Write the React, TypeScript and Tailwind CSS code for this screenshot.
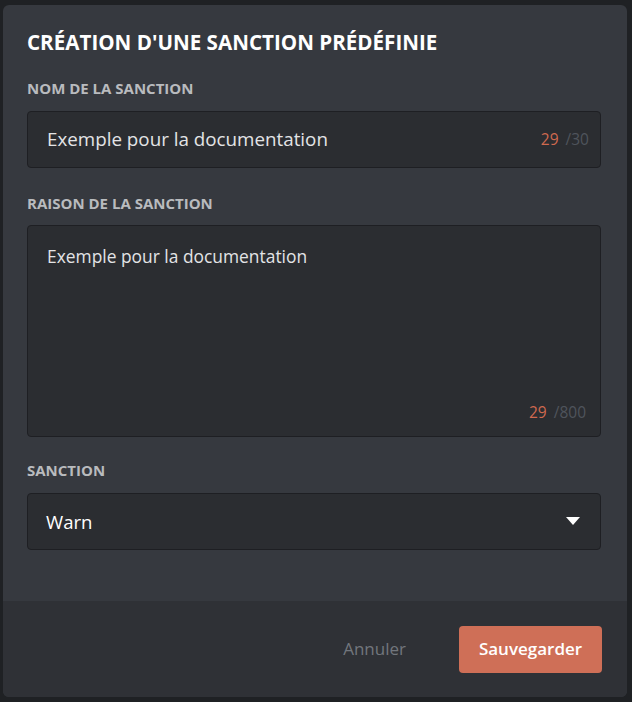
import { useState } from "react";

export default function App() {
  const [name, setName] = useState("Exemple pour la documentation");
  const [reason, setReason] = useState("Exemple pour la documentation");
  const [type] = useState("Warn");

  return (
    <div className="w-[632px] h-[702px] bg-[#1f2124] pt-[5px] pl-[3px] overflow-hidden" style={{ fontFamily: '"Open Sans", sans-serif' }}>
      <div className="w-[624px] h-[692px] rounded-[6px] bg-[#36393f] flex flex-col overflow-hidden">
        <div className="flex-1 pl-[24px] pr-[26px] pt-[27px]">
          <h1 className="text-[20.6px] leading-[20px] font-bold text-white uppercase">Création d'une sanction prédéfinie</h1>

          <label className="block mt-[29px] text-[15px] leading-[15px] font-bold text-[#b9bbbe] uppercase">Nom de la sanction</label>
          <div className="mt-[15px] h-[57px] rounded-[4px] border border-[#1e1f23] bg-[#2b2d31] flex items-center pl-[19px] pr-[11px]">
            <input
              value={name}
              onChange={(e) => setName(e.target.value.slice(0, 30))}
              className="flex-1 bg-transparent outline-none text-[18.8px] text-[#e3e4e6]"
            />
            <span className="text-[15.5px] text-[#d0694f]">{name.length}</span>
            <span className="ml-[7px] text-[15.5px] text-[#4f545c]">/30</span>
          </div>

          <label className="block mt-[28px] text-[15px] leading-[15px] font-bold text-[#b9bbbe] uppercase">Raison de la sanction</label>
          <div className="mt-[14px] h-[212px] rounded-[4px] border border-[#1e1f23] bg-[#2b2d31] flex flex-col pl-[19px] pr-[14px] pt-[18px] pb-[14px]">
            <textarea
              value={reason}
              onChange={(e) => setReason(e.target.value.slice(0, 800))}
              className="flex-1 resize-none bg-transparent outline-none text-[17.4px] leading-[24px] text-[#e3e4e6]"
            />
            <div className="text-right text-[15.5px] leading-[20px]">
              <span className="text-[#d0694f]">{reason.length}</span>
              <span className="ml-[7px] text-[#4f545c]">/800</span>
            </div>
          </div>

          <label className="block mt-[26px] text-[15px] leading-[15px] font-bold text-[#b9bbbe] uppercase">Sanction</label>
          <div className="mt-[15px] h-[57px] rounded-[4px] border border-[#1e1f23] bg-[#2b2d31] flex items-center pl-[18px] pr-[20px]">
            <span className="flex-1 text-[18.6px] text-white">{type}</span>
            <svg width="14" height="9" viewBox="0 0 14 9">
              <path d="M0 0 L14 0 L7 8 Z" fill="#ffffff" />
            </svg>
          </div>
        </div>

        <div className="h-[96px] bg-[#2f3136] flex items-center justify-end pr-[25px]">
          <button className="text-[17px] text-[#72767d] mr-[53px]">Annuler</button>
          <button className="h-[47px] w-[143px] rounded-[4px] bg-[#cf6f57] text-[17px] font-semibold text-white">Sauvegarder</button>
        </div>
      </div>
    </div>
  );
}
